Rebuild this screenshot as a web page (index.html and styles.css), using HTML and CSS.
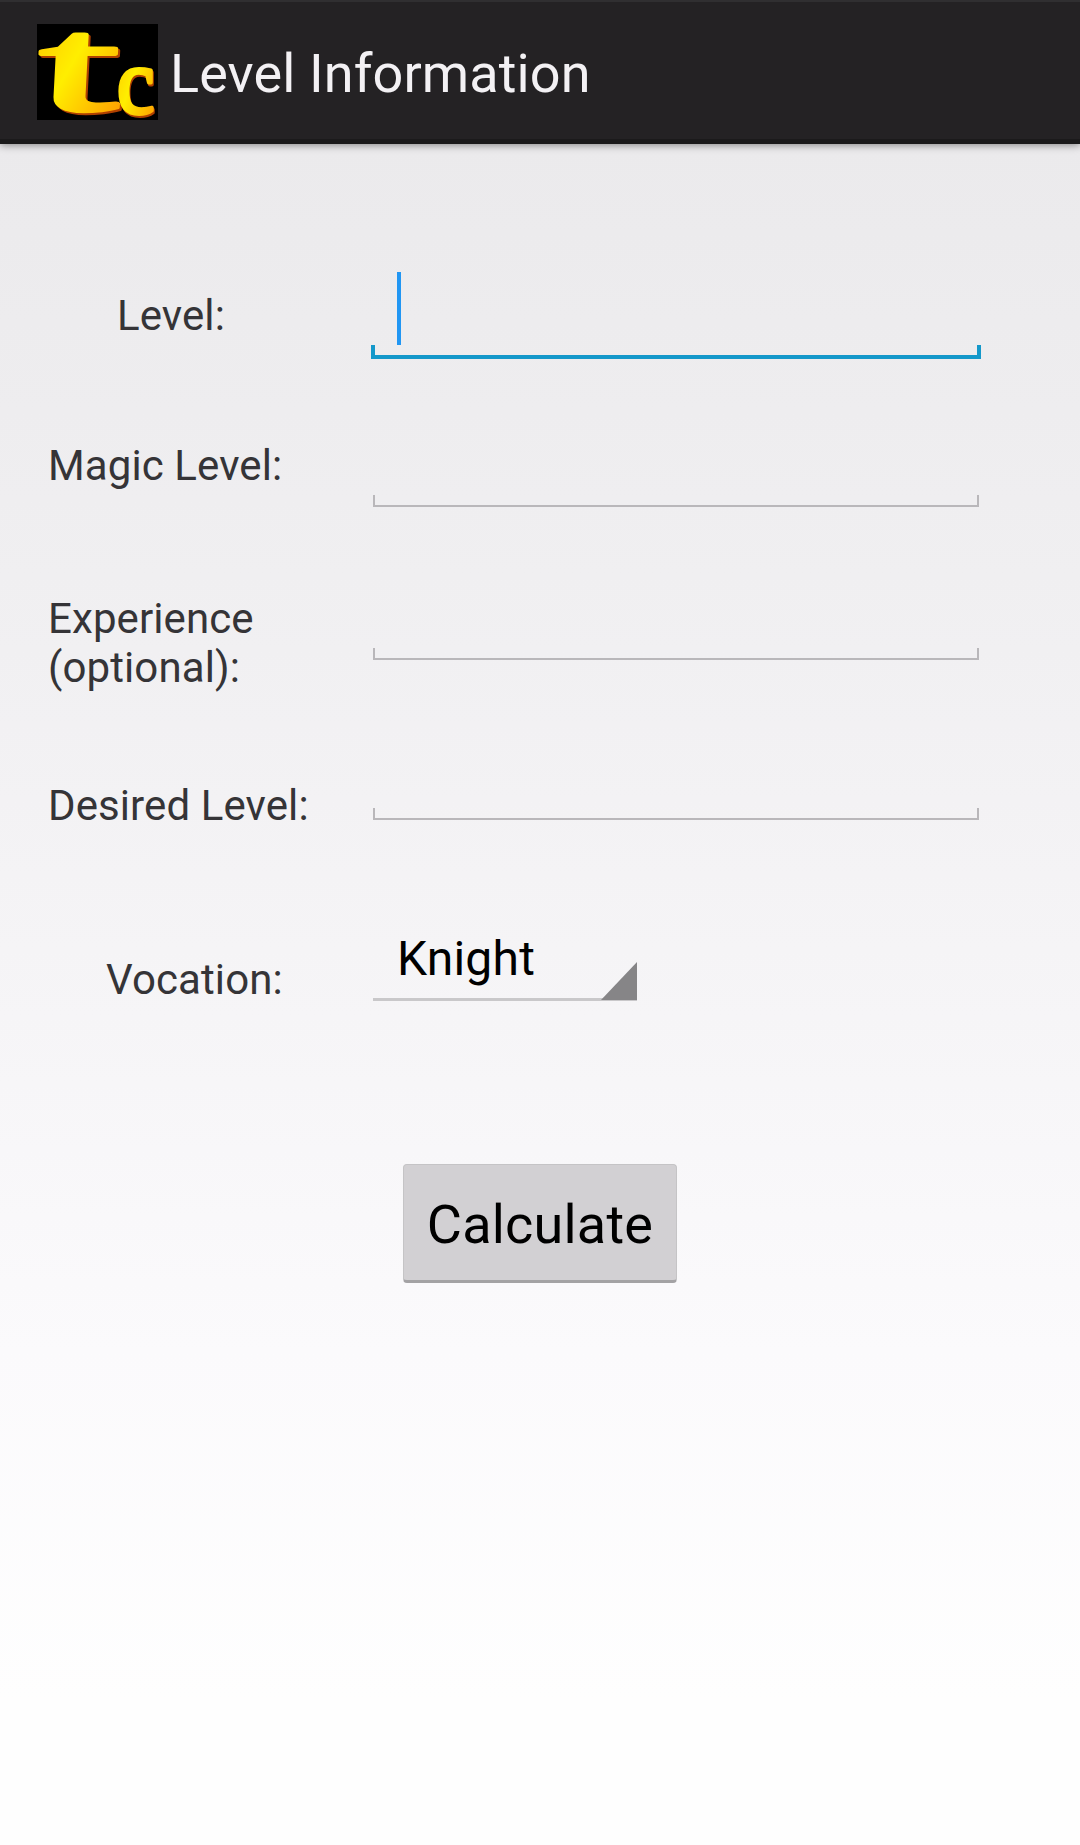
FILE: index.html
```
<!DOCTYPE html>
<html lang="en">

<head>
    <meta charset="UTF-8" />
    <meta name="viewport" content="width=device-width, initial-scale=1.0" />
    <title>Level Information</title>
    <link rel="stylesheet" href="styles.css">
</head>

<body>
    <header class="action-bar">
        <svg class="logo" viewBox="0 0 121 96" aria-label="tc">
            <defs>
                <linearGradient id="gold" x1="0" y1="0" x2="1" y2="1">
                    <stop offset="0" stop-color="#ffc000" />
                    <stop offset="0.45" stop-color="#ffee00" />
                    <stop offset="1" stop-color="#ff9500" />
                </linearGradient>
            </defs>
            <rect width="121" height="96" fill="#000" />
            <g class="logo-shade">
                <text transform="translate(2 88) skewX(-3) scale(2.15 1)" font-size="134">t</text>
                <text transform="translate(81 91) scale(0.9 1)" font-size="94">c</text>
            </g>
            <g class="logo-face">
                <text transform="translate(0 86) skewX(-3) scale(2.15 1)" font-size="134">t</text>
                <text transform="translate(80 89) scale(0.9 1)" font-size="94">c</text>
            </g>
        </svg>
        <h1>Level Information</h1>
    </header>

    <main class="form">
        <div class="row row-level">
            <label>Level:</label>
            <div class="field focused"><span class="caret"></span></div>
        </div>
        <div class="row row-magic">
            <label>Magic Level:</label>
            <div class="field"></div>
        </div>
        <div class="row row-experience">
            <label>Experience<br>(optional):</label>
            <div class="field"></div>
        </div>
        <div class="row row-desired">
            <label>Desired Level:</label>
            <div class="field"></div>
        </div>
        <div class="row row-vocation">
            <label>Vocation:</label>
            <div class="spinner">
                <span>Knight</span>
                <svg class="arrow" viewBox="0 0 36 38">
                    <path d="M36 0V38H0Z" fill="#868587" />
                </svg>
            </div>
        </div>
        <button class="calculate-btn" type="button">Calculate</button>
    </main>
</body>

</html>
```
FILE: styles.css
```
body {
    margin: 0;
    min-height: 1845px;
    font-family: Roboto, sans-serif;
    background: linear-gradient(#ebeaec 144px, #efeef0 500px, #f5f4f6 950px, #fbfafc 1350px, #fefefe 1700px);
}

.action-bar {
    display: flex;
    align-items: center;
    box-sizing: border-box;
    height: 144px;
    padding-left: 37px;
    background-color: #242224;
    border-top: 2px solid #302f31;
    border-bottom: 5px solid #1b1a1b;
    box-shadow: 0 1px 8px rgba(0, 0, 0, 0.45);
}

.logo {
    width: 121px;
    height: 96px;
    margin-top: 3px;
    overflow: visible;
}

.logo text {
    font-family: "Liberation Serif", serif;
    stroke-width: 4px;
    stroke-linejoin: round;
}

.logo-shade {
    fill: #b04000;
    stroke: #b04000;
}

.logo-face {
    fill: url(#gold);
    stroke: url(#gold);
}

h1 {
    margin: 7px 0 0 12px;
    font-size: 54px;
    font-weight: normal;
    line-height: 64px;
    letter-spacing: 0.1px;
    color: #f3f1f4;
}

.form {
    display: flex;
    flex-direction: column;
    padding: 128px 0 0 48px;
}

.row {
    display: grid;
    grid-template-columns: 323px 610px;
    align-items: start;
}

.row-level {
    height: 148px;
}

.row-magic {
    height: 153px;
}

.row-experience {
    height: 160px;
}

.row-desired {
    height: 197px;
}

.row-vocation {
    height: 234px;
}

label {
    padding-top: 21px;
    font-size: 42px;
    line-height: 49px;
    letter-spacing: 0.1px;
    color: #353437;
}

.row-level label {
    padding: 19px 0 0 69px;
}

.row-desired label {
    padding-top: 48px;
}

.row-vocation label {
    padding: 25px 0 0 58px;
}

/* underline with a short tick at each end */
.field {
    --line: #b9b7ba;
    box-sizing: border-box;
    height: 87px;
    margin: 0 2px;
    background:
        linear-gradient(var(--line), var(--line)) left bottom / 2px 12px no-repeat,
        linear-gradient(var(--line), var(--line)) right bottom / 2px 12px no-repeat;
    border-bottom: 2px solid var(--line);
    background-origin: border-box;
}

.field.focused {
    --line: #1498ca;
    margin: 0;
    padding-left: 26px;
    background-size: 4px 14px;
    border-bottom-width: 4px;
}

.caret {
    display: block;
    width: 4px;
    height: 73px;
    background-color: #2196f3;
}

.spinner {
    display: flex;
    justify-content: space-between;
    align-items: flex-end;
    box-sizing: border-box;
    width: 264px;
    height: 71px;
    margin-left: 2px;
    padding-left: 24px;
    border-bottom: 3px solid #c9c8ca;
    font-size: 48px;
    line-height: 56px;
    letter-spacing: 0.2px;
    color: #000;
}

.spinner span {
    margin-bottom: 11px;
}

.arrow {
    width: 36px;
    height: 38px;
    margin-bottom: -2px;
}

.calculate-btn {
    width: 274px;
    height: 119px;
    margin-left: 355px;
    padding: 4px 0 0;
    border: 1px solid #c5c4c6;
    border-bottom: 3px solid #a3a2a4;
    border-radius: 4px;
    background-color: #d2d0d3;
    font-family: inherit;
    font-size: 54px;
    letter-spacing: 0.2px;
    color: #000;
}
```
